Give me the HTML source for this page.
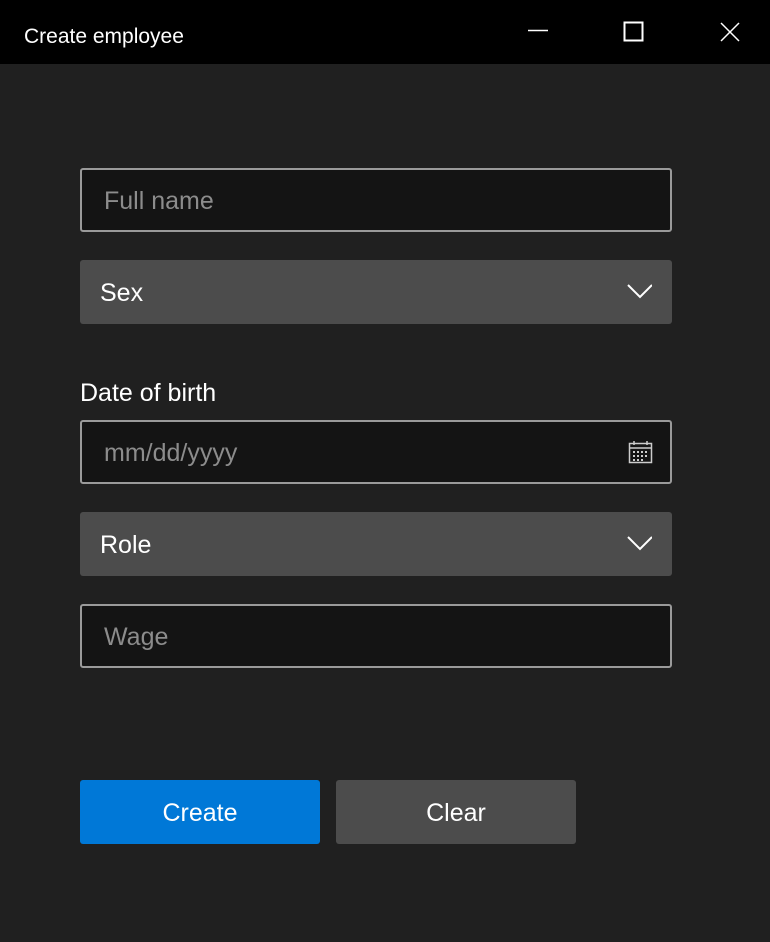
<!DOCTYPE html>
<html><head><style>
*{margin:0;padding:0;box-sizing:border-box}
body{width:770px;height:942px;background:#202020;font-family:"Segoe UI","Liberation Sans",sans-serif;position:relative;overflow:hidden;color:#fff}
.title{position:absolute;left:0;top:0;width:770px;height:64px;background:#000}
.title span{position:absolute;left:24px;top:25px;font-size:21px;color:#fff}
.inp{position:absolute;left:80px;width:592px;height:64px;background:#141414;border:2px solid #9a9a9a;border-radius:3px}
.inp span{position:absolute;left:22px;top:17px;font-size:25px;color:#8c8c8c}
.cb{position:absolute;left:80px;width:592px;height:64px;background:#4c4c4c;border-radius:3px}
.cb span{position:absolute;left:20px;top:19px;font-size:25px;color:#fff}
.cb svg{position:absolute;left:546px;top:20px}
.lbl{position:absolute;left:80px;top:379px;font-size:25px}
.btn{position:absolute;top:780px;width:240px;height:64px;border-radius:3px;font-size:25px;text-align:center;line-height:66px}
</style></head><body>
<div class="title"><span>Create employee</span>
<svg width="770" height="64" style="position:absolute;left:0;top:0" stroke="#fff" fill="none" stroke-width="1.5">
<line x1="528" y1="30.5" x2="548" y2="30.5"/>
<rect x="624.5" y="22.5" width="18" height="18" stroke-width="2"/>
<line x1="721" y1="23" x2="739" y2="41"/><line x1="739" y1="23" x2="721" y2="41"/>
</svg></div>
<div class="inp" style="top:168px"><span>Full name</span></div>
<div class="cb" style="top:260px"><span>Sex</span><svg width="26" height="20"><polyline points="2,5 14,17 26,5" stroke="#fff" stroke-width="2" fill="none"/></svg></div>
<div class="lbl">Date of birth</div>
<div class="inp" style="top:420px"><span>mm/dd/yyyy</span>
<svg width="26" height="26" style="position:absolute;left:546px;top:18px" fill="none" stroke="#ccc" stroke-width="1.5">
<rect x="1.5" y="3.5" width="22" height="19"/><line x1="1.5" y1="8" x2="23.5" y2="8"/>
<line x1="6" y1="1" x2="6" y2="5"/><line x1="19" y1="1" x2="19" y2="5"/>
<g fill="#ccc" stroke="none"><rect x="5" y="11" width="2" height="2"/><rect x="9" y="11" width="2" height="2"/><rect x="13" y="11" width="2" height="2"/><rect x="17" y="11" width="2" height="2"/><rect x="5" y="15" width="2" height="2"/><rect x="9" y="15" width="2" height="2"/><rect x="13" y="15" width="2" height="2"/><rect x="17" y="15" width="2" height="2"/><rect x="5" y="19" width="2" height="2"/><rect x="9" y="19" width="2" height="2"/><rect x="13" y="19" width="2" height="2"/></g>
</svg></div>
<div class="cb" style="top:512px"><span>Role</span><svg width="26" height="20"><polyline points="2,5 14,17 26,5" stroke="#fff" stroke-width="2" fill="none"/></svg></div>
<div class="inp" style="top:604px"><span>Wage</span></div>
<div class="btn" style="left:80px;background:#0078d7">Create</div>
<div class="btn" style="left:336px;background:#4c4c4c">Clear</div>
</body></html>
